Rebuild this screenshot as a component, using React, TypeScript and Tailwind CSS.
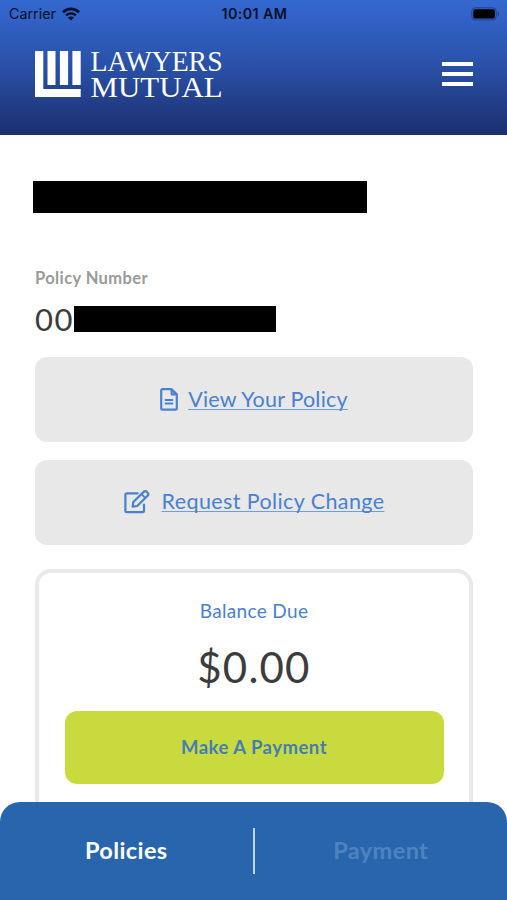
import React from "react";

const WifiIcon = () => (
  <svg width="18" height="14" viewBox="0 0 18 14" fill="none" stroke="#06102a">
    <path d="M1 5.2C5.6.7 12.4.7 17 5.2" strokeWidth="2.7" />
    <path d="M4 8.4c2.9-2.8 7.1-2.8 10 0" strokeWidth="2.3" />
    <path d="M9 13.6 5.9 10.6c1.8-1.6 4.4-1.6 6.2 0z" fill="#06102a" stroke="none" />
  </svg>
);

const BatteryIcon = () => (
  <svg width="29" height="14" viewBox="0 0 29 14">
    <rect x=".8" y=".8" width="24.4" height="12.2" rx="3.6" fill="none" stroke="#1f3f83" />
    <rect x="2.3" y="2.2" width="21.6" height="9.4" rx="2.2" fill="#000" />
    <path d="M26.8 4.8v4.4c1.7-.7 1.7-3.7 0-4.4z" fill="#1f3f83" />
  </svg>
);

const Logo = () => (
  <svg width="190" height="48" viewBox="0 0 190 48" fill="#fff" className="overflow-visible">
    <path d="M0 0h8.3v38h37.4v8H0z" />
    <path d="M12.5 0h8v34h-8zM24.9 0h8.2v34h-8.2zM37.4 0h8.3v34h-8.3z" />
    <g fontFamily="'Liberation Serif', serif" fontSize="30">
      <text x="55.6" y="20.3" textLength="132" lengthAdjust="spacingAndGlyphs">
        LAWYERS
      </text>
      <text x="55.6" y="46" textLength="132" lengthAdjust="spacingAndGlyphs">
        MUTUAL
      </text>
    </g>
  </svg>
);

const FileIcon = () => (
  <svg width="18" height="23" viewBox="0 0 18 23" fill="none" stroke="#4a80d0" strokeLinejoin="round">
    <path d="M11.6 1.2H2.6A1.4 1.4 0 0 0 1.2 2.6v17.6a1.4 1.4 0 0 0 1.4 1.4h12.8a1.4 1.4 0 0 0 1.4-1.4V6.4z" strokeWidth="2.2" />
    <path d="M11.4 1.8v4.8h4.8z" fill="#7fa5e0" strokeWidth="1.6" />
    <path d="M4.8 12h8.4M4.8 15.6h8.4" strokeWidth="2" />
  </svg>
);

const EditIcon = () => (
  <svg width="26" height="24" viewBox="0 0 26 24" fill="none" stroke="#4a80d0" strokeWidth="2.2" strokeLinejoin="round">
    <path d="M13.6 3.4H2.7a1.3 1.3 0 0 0-1.3 1.3v16.2a1.3 1.3 0 0 0 1.3 1.3h16a1.3 1.3 0 0 0 1.3-1.3v-6.2" strokeLinecap="round" />
    <path d="M8.6 16.6l.7-4.6L19.7 1.9a2.2 2.2 0 0 1 3.1 0l.8.8a2.2 2.2 0 0 1 0 3.1L13.2 16z" />
    <path d="M17.5 4.2l3.9 3.9" strokeWidth="1.8" />
  </svg>
);

const App = () => {
  return (
    <div className="flex h-[900px] w-[507px] flex-col overflow-hidden bg-white font-['Lato',sans-serif]">
      <header className="h-[135px] shrink-0 bg-linear-to-b from-[#3469d2] via-[#2950a6] to-[#1c2f70]">
        <div className="grid h-7 grid-cols-3 items-center pr-[7px] pl-[9px] font-['Inter',sans-serif] text-[14.3px] text-[#06102a]">
          <div className="flex items-center gap-1.5">
            <span>Carrier</span>
            <WifiIcon />
          </div>
          <span className="text-center font-semibold tracking-[0.4px] whitespace-nowrap">10:01 AM</span>
          <div className="flex justify-end">
            <BatteryIcon />
          </div>
        </div>
        <div className="mt-[23px] flex items-start justify-between pr-[34px] pl-[35px]">
          <Logo />
          <div className="mt-[11px] flex w-[31px] flex-col gap-[6px]">
            <span className="h-1 bg-white" />
            <span className="h-1 bg-white" />
            <span className="h-1 bg-white" />
          </div>
        </div>
      </header>

      <main className="flex min-h-0 flex-1 flex-col overflow-hidden px-[35px]">
        <div className="mt-[46px] -ml-0.5 h-8 w-[334px] shrink-0 bg-black" />
        <p className="mt-[55px] text-[16.5px] leading-5 font-bold tracking-[0.4px] text-[#9a9a9a]">Policy Number</p>
        <div className="mt-[18px] flex h-[26px] shrink-0 items-center">
          <span className="w-[39px] text-[31px] leading-[26px] tracking-[1.4px] text-[#3c3c3c]">00</span>
          <span className="h-[26px] w-[202px] bg-black" />
        </div>

        <button className="mt-[25px] flex h-[85px] w-[438px] shrink-0 items-center justify-center gap-2.5 rounded-xl bg-[#e8e8e8]">
          <FileIcon />
          <span className="pb-0.5 text-[21.5px] leading-6 tracking-[0.2px] text-[#4a80d0] underline decoration-[#6f9ce0] decoration-1 underline-offset-2 [text-decoration-skip-ink:none]">
            View Your Policy
          </span>
        </button>
        <button className="mt-[17.5px] flex h-[85px] w-[438px] shrink-0 items-center justify-center gap-3 rounded-xl bg-[#e8e8e8]">
          <EditIcon />
          <span className="pb-0.5 text-[21.5px] leading-6 tracking-[0.4px] text-[#4a80d0] underline decoration-[#6f9ce0] decoration-1 underline-offset-2 [text-decoration-skip-ink:none]">
            Request Policy Change
          </span>
        </button>

        <section className="mt-[24.5px] flex h-[300px] w-[438px] shrink-0 flex-col items-center rounded-2xl border-4 border-[#e9e9e9] px-[25px]">
          <p className="mt-[26px] text-[19px] leading-6 tracking-[0.35px] text-[#4a80d0]">Balance Due</p>
          <p className="mt-[19px] text-[42px] leading-[50px] tracking-[1.2px] text-[#3c3c3c]">$0.00</p>
          <button className="mt-[19px] h-[73px] w-[379px] rounded-xl bg-[#c9da3e] text-[18.5px] font-bold tracking-[0.5px] text-[#437eb5]">
            Make A Payment
          </button>
        </section>
      </main>

      <nav className="flex h-[98px] shrink-0 items-center rounded-t-[20px] bg-[#2865ad] text-[23.5px] font-bold tracking-[0.4px]">
        <span className="flex-1 text-center text-white">Policies</span>
        <span className="h-[46px] w-0.5 bg-[#c3d5ea]" />
        <span className="flex-1 text-center text-[#4f83bf]">Payment</span>
      </nav>
    </div>
  );
};

export default App;
